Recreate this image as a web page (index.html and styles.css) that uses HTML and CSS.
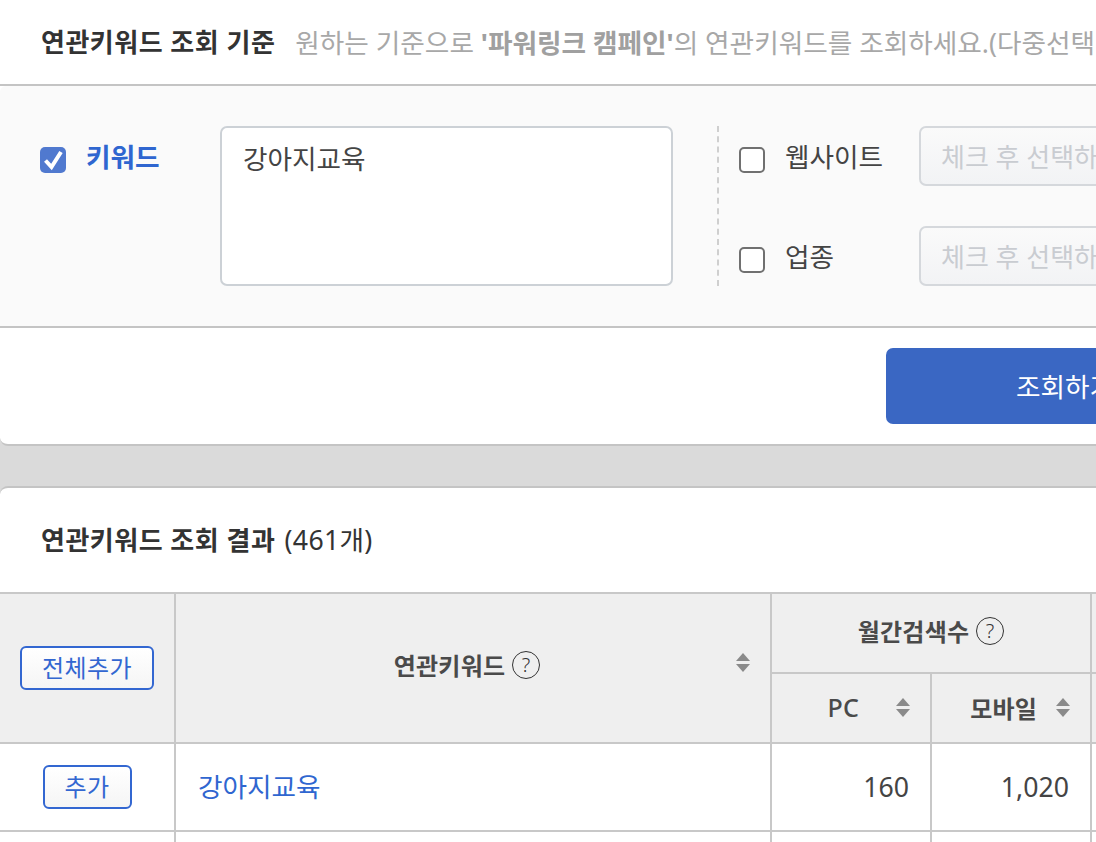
FILE: index.html
```html
<!DOCTYPE html>
<html lang="ko">
<head>
<meta charset="utf-8">
<title>연관키워드 조회</title>
<link rel="stylesheet" href="styles.css">
</head>
<body>
<main class="page">
  <section class="card">
    <header class="head">
      <h2 class="title">연관키워드 조회 기준</h2>
      <p class="desc">원하는 기준으로 <b>'파워링크 캠페인'</b>의 연관키워드를 조회하세요.(다중선택 가능)</p>
    </header>
    <div class="filter">
      <div class="kw">
        <span class="check on"><svg viewBox="0 0 26 26" width="26" height="26"><path d="M5.5 13.5l6 6.5L21 5" fill="none" stroke="#fff" stroke-width="4"/></svg></span>
        <span class="kw-label">키워드</span>
        <textarea class="area">강아지교육</textarea>
      </div>
      <div class="opts">
        <div class="opt">
          <span class="check"></span>
          <span class="opt-label">웹사이트</span>
          <input class="pick" disabled placeholder="체크 후 선택하세요">
        </div>
        <div class="opt">
          <span class="check"></span>
          <span class="opt-label">업종</span>
          <input class="pick" disabled placeholder="체크 후 선택하세요">
        </div>
      </div>
    </div>
    <div class="actions">
      <button class="go">조회하기</button>
    </div>
  </section>

  <section class="card second">
    <h2 class="result">연관키워드 조회 결과 <span class="count">(461개)</span></h2>
    <table class="grid">
      <colgroup>
        <col class="c1"><col class="c2"><col class="c3"><col class="c3"><col class="c5">
      </colgroup>
      <thead>
        <tr class="r1">
          <th rowspan="2"><button class="add all">전체추가</button></th>
          <th rowspan="2" class="kw-head">
            <span class="th-in">연관키워드 <span class="q">?</span></span>
            <svg class="sort abs" viewBox="0 0 14 19" width="14" height="19"><path d="M7 0L14 8H0zM7 19L0 11H14z"/></svg>
          </th>
          <th colspan="2" class="month"><span class="th-in">월간검색수 <span class="q">?</span></span></th>
          <th></th>
        </tr>
        <tr class="r2">
          <th class="sub"><span class="th-right"><span class="wide">PC</span><svg class="sort" viewBox="0 0 14 19" width="14" height="19"><path d="M7 0L14 8H0zM7 19L0 11H14z"/></svg></span></th>
          <th class="sub"><span class="th-right"><span class="narrow">모바일</span><svg class="sort" viewBox="0 0 14 19" width="14" height="19"><path d="M7 0L14 8H0zM7 19L0 11H14z"/></svg></span></th>
          <th></th>
        </tr>
      </thead>
      <tbody>
        <tr class="r3">
          <td class="mid"><button class="add">추가</button></td>
          <td class="name"><a class="link" href="#">강아지교육</a></td>
          <td class="num">160</td>
          <td class="num">1,020</td>
          <td></td>
        </tr>
        <tr class="r3">
          <td></td><td></td><td></td><td></td><td></td>
        </tr>
      </tbody>
    </table>
  </section>
</main>
</body>
</html>
```

FILE: styles.css
```css
* { box-sizing: border-box; }
html { height: 842px; overflow: hidden; }
body {
  margin: 0;
  height: 842px;
  overflow: hidden;
  background: #dadada;
  color: #333;
  font-family: "Noto Sans", "Noto Sans CJK KR", sans-serif;
  font-size: 26.67px;
}
.page { width: 1456px; }
.card {
  background: #fff;
  border-bottom: 2px solid #c4c4c4;
  border-radius: 0 0 8px 8px;
}
.second {
  margin-top: 40px;
  border-top: 2px solid #c4c4c4;
  border-bottom: 0;
  border-radius: 8px 8px 0 0;
}
.head {
  display: flex;
  align-items: center;
  height: 86px;
  padding: 0 0 2px 41px;
  border-bottom: 2px solid #c4c4c4;
  white-space: nowrap;
}
.title, .result {
  margin: 0;
  font-size: 26px;
  font-weight: 700;
  letter-spacing: 0.5px;
  color: #333;
}
.desc {
  margin: 0 0 0 20px;
  color: #a8a8a8;
}
.desc b { font-weight: 700; color: #a0a0a0; }
.filter {
  display: flex;
  height: 242px;
  padding: 40px 0 0 40px;
  background: #fafafa;
  border-bottom: 2px solid #c4c4c4;
  border-radius: 6px 0 0 0;
}
.kw {
  display: flex;
  align-items: flex-start;
  width: 679px;
  height: 160px;
  border-right: 2px dashed #cfcfcf;
}
.check {
  flex: none;
  display: block;
  width: 26px;
  height: 26px;
  margin-top: 21px;
  border: 2px solid #707070;
  border-radius: 5px;
  background: #fff;
}
.check.on {
  border: 0;
  background: #5079cf;
}
.check svg { display: block; }
.kw-label {
  width: 134px;
  margin: 12px 0 0 20px;
  color: #2f66d0;
  font-weight: 700;
  line-height: 38px;
}
.area {
  width: 453px;
  height: 160px;
  padding: 12px 21px;
  border: 2px solid #ccd1d6;
  border-radius: 7px;
  background: #fff;
  color: #444;
  font: inherit;
  line-height: 38px;
  resize: none;
  outline: 0;
}
.opts {
  display: flex;
  flex-direction: column;
  gap: 40px;
  padding-left: 20px;
}
.opt {
  display: flex;
  align-items: flex-start;
  height: 60px;
}
.opt-label {
  width: 134px;
  margin: 12px 0 0 20px;
  color: #444;
  line-height: 38px;
}
.pick {
  width: 400px;
  height: 60px;
  padding: 2px 20px 0;
  border: 2px solid #d5d8dc;
  border-radius: 7px;
  background: linear-gradient(#fafafa, #f2f3f5);
  font: inherit;
  font-size: 26px;
}
.pick::placeholder { color: #c9ccd1; opacity: 1; }
.actions {
  display: flex;
  height: 116px;
  padding: 20px 0 0 886px;
}
.go {
  width: 358px;
  height: 76px;
  border: 0;
  border-radius: 7px;
  background: #3a67c3;
  color: #fff;
  font: inherit;
  padding: 0 0 2px;
}
.result {
  height: 104px;
  padding: 0 0 0 41px;
  line-height: 104px;
  white-space: nowrap;
}
.count { font-weight: 400; font-size: 26.67px; letter-spacing: 0.3px; margin-left: 2px; }
.grid {
  table-layout: fixed;
  width: 1456px;
  border-collapse: separate;
  border-spacing: 0;
  border-top: 2px solid #c8c8c8;
}
.c1 { width: 176px; }
.c2 { width: 596px; }
.c3 { width: 160px; }
th, td {
  padding: 0;
  border-right: 2px solid #c8c8c8;
  border-bottom: 2px solid #c8c8c8;
}
th {
  background: #efefef;
  color: #4a4a4a;
  font-size: 24px;
  font-weight: 700;
  letter-spacing: 0.2px;
}
.r1 { height: 80px; }
.r2 { height: 70px; }
.r3 { height: 88px; }
.kw-head { position: relative; padding: 0 12px 7px 0; }
.month { padding-bottom: 5px; }
.sub { padding-bottom: 2px; }
.th-in { display: inline-flex; align-items: center; gap: 7px; }
.q {
  display: inline-flex;
  align-items: center;
  justify-content: center;
  width: 28px;
  height: 28px;
  border: 1.5px solid #333;
  border-radius: 50%;
  color: #333;
  font-size: 20px;
  font-weight: 300;
}
.sort { display: block; fill: #8a8a8a; }
.sort.abs { position: absolute; right: 20px; top: 59px; }
.th-right { display: flex; align-items: center; justify-content: flex-end; padding-right: 20px; }
.wide { margin-right: 37px; font-size: 25px; font-weight: 500; }
.narrow { margin-right: 19px; }
.add {
  display: block;
  margin: 0 auto;
  height: 44px;
  padding: 0 0 1px;
  border: 2px solid #3367d1;
  border-radius: 6px;
  background: linear-gradient(#fff, #f5f5f5);
  color: #3367d1;
  font: inherit;
  font-size: 24px;
  font-weight: 400;
  letter-spacing: 0.4px;
  line-height: 38px;
}
.all { width: 134px; }
.mid .add { width: 89px; }
.name { padding-bottom: 3px; }
.link {
  margin-left: 22px;
  color: #2f66d0;
  text-decoration: none;
}
.num {
  padding: 0 21px 2px 0;
  text-align: right;
  color: #444;
}
```
